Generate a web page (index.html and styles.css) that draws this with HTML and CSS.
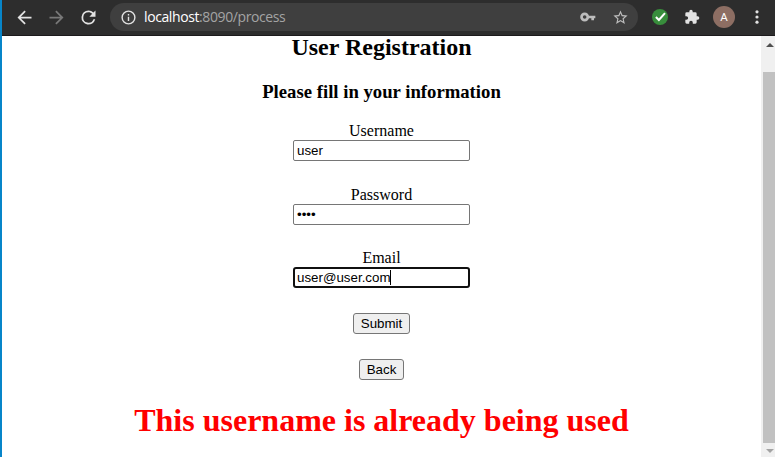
FILE: index.html
```html
<!DOCTYPE html>
<html lang="en">
<head>
<meta charset="utf-8">
<title>User Registration</title>
<link rel="stylesheet" href="styles.css">
</head>
<body>
<div class="window">
  <header class="toolbar">
    <svg class="nav" viewBox="0 0 24 24"><path d="M20 11H7.830l5.590-5.590L12 4l-8 8 8 8 1.410-1.410L7.830 13H20v-2z"/></svg>
    <svg class="nav disabled" viewBox="0 0 24 24"><path d="M12 4l-1.410 1.410L16.170 11H4v2h12.170l-5.580 5.590L12 20l8-8z"/></svg>
    <svg class="nav" viewBox="0 0 24 24"><path d="M17.650 6.350A7.960 7.960 0 0 0 12 4a8 8 0 1 0 7.730 10h-2.080A6 6 0 1 1 12 6c1.660 0 3.140.690 4.220 1.780L13 11h7V4l-2.350 2.350z"/></svg>
    <div class="address">
      <svg class="info" viewBox="0 0 24 24"><path d="M11 7h2v2h-2zm0 4h2v6h-2zm1-9a10 10 0 1 0 0 20 10 10 0 0 0 0-20zm0 18a8 8 0 1 1 0-16 8 8 0 0 1 0 16z"/></svg>
      <span class="url"><span class="host">localhost</span><span class="path">:8090/process</span></span>
      <svg class="key" viewBox="0 0 24 24"><path d="M7 12m-4.700 0a4.700 4.700 0 1 0 9.400 0a4.700 4.700 0 1 0-9.400 0M11.700 12H23M19 12v5"/></svg>
      <svg class="star" viewBox="0 0 24 24"><path d="M22 9.240l-7.190-.620L12 2 9.190 8.630 2 9.240l5.460 4.730L5.820 21 12 17.270 18.180 21l-1.630-7.030L22 9.240zM12 15.400l-3.760 2.270 1-4.280-3.320-2.880 4.380-.380L12 6.100l1.710 4.040 4.380.380-3.320 2.880 1 4.280L12 15.400z"/></svg>
    </div>
    <svg class="check" viewBox="0 0 16 16"><circle cx="8" cy="8" r="8"/><path d="M3.900 8l3 3L13 4.200"/></svg>
    <svg class="puzzle" viewBox="0 0 24 24"><path d="M20.500 11H19V7a2 2 0 0 0-2-2h-4V3.500a2.500 2.500 0 0 0-5 0V5H4a2 2 0 0 0-2 2v3.800h1.500a2.700 2.700 0 0 1 0 5.400H2V20a2 2 0 0 0 2 2h3.800v-1.500a2.700 2.700 0 0 1 5.400 0V22H17a2 2 0 0 0 2-2v-4h1.500a2.500 2.500 0 0 0 0-5z"/></svg>
    <span class="avatar">A</span>
    <svg class="menu" viewBox="0 0 4 16"><circle cx="2" cy="2.800" r="1.600"/><circle cx="2" cy="8" r="1.600"/><circle cx="2" cy="13.200" r="1.600"/></svg>
  </header>
  <div class="viewport">
    <main class="page">
      <h2>User Registration</h2>
      <h3>Please fill in your information</h3>
      <label class="field"><span>Username</span><input type="text" value="user"></label>
      <label class="field"><span>Password</span><input type="password" value="user"></label>
      <label class="field"><span>Email</span><span class="focused">user@user.com<i class="caret"></i></span></label>
      <button class="submit">Submit</button>
      <button class="back">Back</button>
      <h1>This username is already being used</h1>
    </main>
    <div class="scrollbar">
      <svg class="up" viewBox="0 0 8 4"><path d="M0 4L4 0l4 4z"/></svg>
      <div class="thumb"></div>
      <svg class="down" viewBox="0 0 8 4"><path d="M0 0h8L4 4z"/></svg>
    </div>
  </div>
</div>
</body>
</html>
```

FILE: styles.css
```css
* { box-sizing: border-box; }
body { margin: 0; overflow: hidden; background: #fff; }
.window { height: 457px; border-left: 2px solid #0785c9; display: flex; flex-direction: column; }
.toolbar { height: 36px; flex: none; background: #2d2d2d; border-bottom: 1px solid #1c1a1c; display: flex; align-items: center; padding: 0 0 1px 11.500px; }
svg { display: block; flex: none; fill: #e2e2e2; }
.nav { width: 21px; height: 21px; margin-right: 11px; }
.nav.disabled { fill: #787878; }
.address { width: 528px; height: 28px; border-radius: 14px; background: #3f3f3f; display: flex; align-items: center; padding-left: 10px; flex: none; margin-left: .500px; }
.info { width: 17px; height: 17px; }
.url { flex: none; width: 433px; margin-left: 7px; font: 14px/20px "Open Sans", sans-serif; letter-spacing: -0.400px; white-space: nowrap; }
.host { color: #fff; }
.path { color: #a4a4a4; }
.key { width: 16px; height: 16px; margin-left: 3px; fill: none; stroke: #bdbdbd; stroke-width: 4; }
.star { width: 17px; height: 17px; margin-left: 16px; fill: #bdbdbd; }
.check { width: 16px; height: 16px; margin-left: 14px; fill: #388e3c; }
.check path { fill: none; stroke: #fff; stroke-width: 2; }
.puzzle { width: 16px; height: 16px; margin-left: 16px; }
.avatar { width: 22px; height: 22px; flex: none; margin-left: 13px; border-radius: 50%; background: #8d6e63; color: #fff; font: 11.500px/22px Roboto, sans-serif; text-align: center; }
.menu { width: 4px; height: 16px; margin-left: 19.500px; }
.viewport { flex: 1; display: flex; min-height: 0; }
.page { flex: 1; display: flex; flex-direction: column; align-items: center; overflow: hidden; font: 16px/18px "Liberation Serif", serif; color: #000; }
h1, h2, h3 { margin: 0; font-weight: bold; }
h2 { font-size: 24px; line-height: 22px; }
h3 { font-size: 18.720px; line-height: 22px; margin: 23px 0 19px; }
.field { display: flex; flex-direction: column; align-items: center; height: 39px; margin-bottom: 25px; }
.field + .field { margin-bottom: 24px; }
.field + .field + .field { margin-bottom: 25px; }
input, .focused { width: 177px; height: 21px; border: 1px solid #767676; border-radius: 2px; padding: 1px 3px; margin: 0; background: #fff; color: #000; font: 13.333px/17px "Liberation Sans", sans-serif; }
input { outline: none; }
.focused { border: 2px solid #101010; border-radius: 3px; padding: 0 2px; }
.caret { display: inline-block; width: 1px; height: 15px; margin-left: -1px; background: #000; vertical-align: -3px; }
button { height: 21px; border: 1px solid #767676; border-radius: 3px; background: #efefef; color: #000; padding: 0; margin: 0; font: 13.333px/17px "Liberation Sans", sans-serif; }
.submit { width: 57px; }
.back { width: 45px; margin-top: 25px; }
h1 { font-size: 32px; line-height: 36px; margin-top: 22px; white-space: nowrap; color: #f00; }
.scrollbar { width: 14px; flex: none; background: #f0f0f0; display: flex; flex-direction: column; padding-left: 2px; }
.up { width: 8px; height: 4px; margin: 7px 0 25px 2.500px; fill: #505050; }
.thumb { height: 371px; background: #c1c1c1; }
.down { width: 8px; height: 4px; margin: 6px 0 0 2.500px; fill: #a3a3a3; }
```
